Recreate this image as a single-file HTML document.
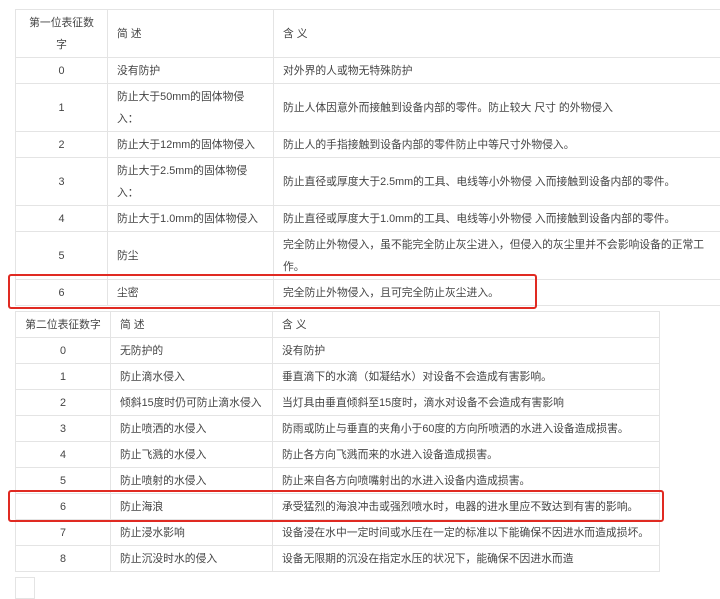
<!DOCTYPE html>
<html><head><meta charset="utf-8"><style>
body{margin:0;background:#fff;width:720px;height:592px;overflow:hidden;position:relative;font-family:"Liberation Sans","Noto Sans CJK SC",sans-serif;font-size:10.8px;color:#444;}
table{border-collapse:collapse;position:absolute;table-layout:fixed;}
td{border:1px solid #e4e4e4;padding:0 0 0 9px;line-height:22px;vertical-align:middle;white-space:nowrap;overflow:hidden;}
td.n{text-align:center;padding:0;}
#t1{left:15px;top:9px;width:720px;}
#t2{left:15px;top:311px;width:645px;}
#t2 tr{height:26px;}
.r{position:absolute;border:2.5px solid #e02a22;border-radius:3px;}
</style></head><body>
<table id="t1">
<colgroup><col style="width:92px"><col style="width:166px"><col></colgroup>
<tr style="height:48px"><td class="n">第一位表征数<br>字</td><td>简 述</td><td>含 义</td></tr>
<tr style="height:26px"><td class="n">0</td><td>没有防护</td><td>对外界的人或物无特殊防护</td></tr>
<tr style="height:48px"><td class="n">1</td><td>防止大于50mm的固体物侵<br>入：</td><td>防止人体因意外而接触到设备内部的零件。防止较大 尺寸 的外物侵入</td></tr>
<tr style="height:26px"><td class="n">2</td><td>防止大于12mm的固体物侵入</td><td>防止人的手指接触到设备内部的零件防止中等尺寸外物侵入。</td></tr>
<tr style="height:48px"><td class="n">3</td><td>防止大于2.5mm的固体物侵<br>入：</td><td>防止直径或厚度大于2.5mm的工具、电线等小外物侵 入而接触到设备内部的零件。</td></tr>
<tr style="height:26px"><td class="n">4</td><td>防止大于1.0mm的固体物侵入</td><td>防止直径或厚度大于1.0mm的工具、电线等小外物侵 入而接触到设备内部的零件。</td></tr>
<tr style="height:48px"><td class="n">5</td><td>防尘</td><td>完全防止外物侵入，虽不能完全防止灰尘进入，但侵入的灰尘里并不会影响设备的正常工<br>作。</td></tr>
<tr style="height:26px"><td class="n">6</td><td>尘密</td><td>完全防止外物侵入，且可完全防止灰尘进入。</td></tr>
</table>
<table id="t2">
<colgroup><col style="width:95px"><col style="width:162px"><col></colgroup>
<tr><td class="n">第二位表征数字</td><td>简 述</td><td>含 义</td></tr>
<tr><td class="n">0</td><td>无防护的</td><td>没有防护</td></tr>
<tr><td class="n">1</td><td>防止滴水侵入</td><td>垂直滴下的水滴（如凝结水）对设备不会造成有害影响。</td></tr>
<tr><td class="n">2</td><td>倾斜15度时仍可防止滴水侵入</td><td>当灯具由垂直倾斜至15度时，滴水对设备不会造成有害影响</td></tr>
<tr><td class="n">3</td><td>防止喷洒的水侵入</td><td>防雨或防止与垂直的夹角小于60度的方向所喷洒的水进入设备造成损害。</td></tr>
<tr><td class="n">4</td><td>防止飞溅的水侵入</td><td>防止各方向飞溅而来的水进入设备造成损害。</td></tr>
<tr><td class="n">5</td><td>防止喷射的水侵入</td><td>防止来自各方向喷嘴射出的水进入设备内造成损害。</td></tr>
<tr><td class="n">6</td><td>防止海浪</td><td>承受猛烈的海浪冲击或强烈喷水时，电器的进水里应不致达到有害的影响。</td></tr>
<tr><td class="n">7</td><td>防止浸水影响</td><td>设备浸在水中一定时间或水压在一定的标准以下能确保不因进水而造成损坏。</td></tr>
<tr><td class="n">8</td><td>防止沉没时水的侵入</td><td>设备无限期的沉没在指定水压的状况下，能确保不因进水而造</td></tr>
</table>
<div class="r" style="left:8px;top:274px;width:525px;height:31px"></div>
<div class="r" style="left:8px;top:490px;width:652px;height:28px"></div>
<div style="position:absolute;left:15px;top:577px;width:18px;height:20px;border:1px solid #e4e4e4"></div>
</body></html>
